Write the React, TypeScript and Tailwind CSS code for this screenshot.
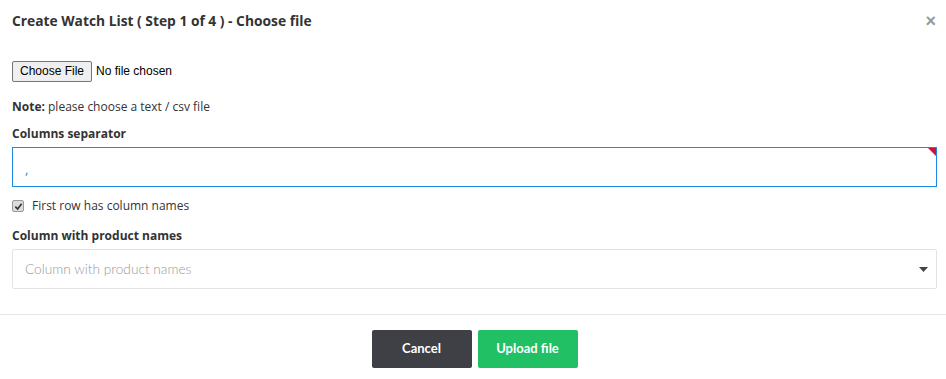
import React from 'react';

export default function App() {
  return (
    <div className="w-[946px] h-[379px] bg-white text-[#333] font-['Open_Sans',sans-serif] overflow-hidden">
      {/* Header */}
      <div className="flex items-center justify-between pl-3 pr-[10px] h-[42px]">
        <h2 className="text-[13.8px] font-bold text-[#333]">
          Create Watch List ( Step 1 of 4 ) - Choose file
        </h2>
        <button className="text-[#999] text-[18px] leading-none font-bold font-['Liberation_Sans',sans-serif]">×</button>
      </div>

      {/* Body */}
      <div className="pl-3 pr-[9px] pt-[19px]">
        <div className="flex items-center h-[20px] text-[12px] font-['Liberation_Sans',sans-serif]">
          <span className="h-[21px] w-[80px] justify-center flex items-center border border-[#767676] rounded-[2px] bg-[#efefef] text-black">
            Choose File
          </span>
          <span className="ml-[4px] text-black">No file chosen</span>
        </div>

        <p className="mt-[18px] text-[12px] leading-[16px]">
          <span className="font-bold">Note:</span> please choose a text / csv file
        </p>

        <label className="block mt-[11px] text-[12px] font-bold leading-[16px]">Columns separator</label>
        <div className="relative mt-[5px] h-[40px] border border-[#1e88e5] flex items-center pl-[12px]">
          <span className="text-[#1e88e5] text-[13px] pt-[6px]">,</span>
          <span className="absolute top-0 right-0 w-0 h-0 border-t-[8px] border-t-[#d0103a] border-l-[8px] border-l-transparent"></span>
        </div>

        <div className="flex items-center mt-[13px] h-[12px]">
          <span className="w-[12px] h-[12px] rounded-[2px] bg-[#dcdcdc] border border-[#9a9a9a] flex items-center justify-center">
            <svg width="9" height="9" viewBox="0 0 10 10">
              <path d="M1.5 5.2 L4 7.8 L8.5 2" fill="none" stroke="#333" strokeWidth="1.8" />
            </svg>
          </span>
          <span className="ml-[8px] text-[12px]">First row has column names</span>
        </div>

        <label className="block mt-[16px] text-[12px] font-bold leading-[16px]">Column with product names</label>
        <div className="mt-[5px] h-[40px] border border-[#e3e3e3] rounded-[2px] flex items-center justify-between pl-[12px] pr-[8px]">
          <span className="text-[#999] text-[13.7px] font-['Lato',sans-serif] font-light">Column with product names</span>
          <svg width="9" height="5" viewBox="0 0 9 5">
            <path d="M0 0 L9 0 L4.5 5 Z" fill="#444" />
          </svg>
        </div>
      </div>

      {/* Footer */}
      <div className="mt-[25px] border-t border-[#e5e5e5] flex justify-center gap-[6px] pt-[15px] pl-[3px]">
        <button className="w-[100px] h-[38px] rounded-[2px] bg-[#3f3f46] text-white text-[13px] font-bold font-['Lato',sans-serif]">
          Cancel
        </button>
        <button className="w-[100px] h-[38px] rounded-[2px] bg-[#22c065] text-white text-[13px] font-bold font-['Lato',sans-serif]">
          Upload file
        </button>
      </div>
    </div>
  );
}
